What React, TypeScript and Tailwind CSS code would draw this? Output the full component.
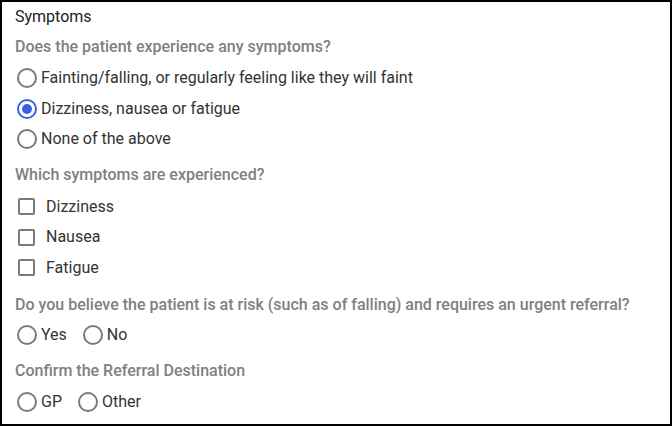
import React from 'react';

const Radio = ({checked = false}: {checked?: boolean}) => (
  <span
    className={`flex items-center justify-center w-[20px] h-[20px] rounded-full border-2 bg-white shrink-0 ${
      checked ? 'border-[#3d5fe6]' : 'border-[#7a7a7a]'
    }`}
  >
    {checked && <span className="w-[10px] h-[10px] rounded-full bg-[#3d5fe6]" />}
  </span>
);

const Checkbox = () => (
  <span className="w-[17px] h-[17px] rounded-[2px] border-2 border-[#7a7a7a] bg-white shrink-0" />
);

const App = () => {
  const symptoms = [
    {label: 'Fainting/falling, or regularly feeling like they will faint', checked: false},
    {label: 'Dizziness, nausea or fatigue', checked: true},
    {label: 'None of the above', checked: false},
  ];

  const experienced = ['Dizziness', 'Nausea', 'Fatigue'];

  return (
    <div className="w-[672px] h-[426px] bg-white border-2 border-black font-['Roboto',sans-serif] text-[16px] text-[#333333] px-[13px]">
      <div className="h-[30px] flex items-center text-[#212121]">Symptoms</div>

      <div className="h-[30px] flex items-center font-medium text-[#808080]">
        Does the patient experience any symptoms?
      </div>
      <div className="mt-[1px]">
        {symptoms.map((s) => (
          <div key={s.label} className="h-[30.5px] flex items-center gap-[4px] pl-[2px]">
            <Radio checked={s.checked} />
            <span>{s.label}</span>
          </div>
        ))}
      </div>

      <div className="h-[30px] mt-[5px] flex items-center font-medium text-[#808080]">
        Which symptoms are experienced?
      </div>
      <div className="mt-[2px]">
        {experienced.map((label) => (
          <div key={label} className="h-[30.5px] flex items-center gap-[11px] pl-[3px]">
            <Checkbox />
            <span>{label}</span>
          </div>
        ))}
      </div>

      <div className="h-[30px] mt-[7px] flex items-center font-medium text-[#808080]">
        Do you believe the patient is at risk (such as of falling) and requires an urgent referral?
      </div>
      <div className="h-[30px] flex items-center gap-[16px] pl-[2px]">
        <div className="flex items-center gap-[4px]">
          <Radio />
          <span>Yes</span>
        </div>
        <div className="flex items-center gap-[4px]">
          <Radio />
          <span>No</span>
        </div>
      </div>

      <div className="h-[30px] mt-[6px] flex items-center font-medium text-[#808080]">
        Confirm the Referral Destination
      </div>
      <div className="h-[30px] mt-[1px] flex items-center gap-[16px] pl-[2px]">
        <div className="flex items-center gap-[4px]">
          <Radio />
          <span>GP</span>
        </div>
        <div className="flex items-center gap-[4px]">
          <Radio />
          <span>Other</span>
        </div>
      </div>
    </div>
  );
};

export default App;
